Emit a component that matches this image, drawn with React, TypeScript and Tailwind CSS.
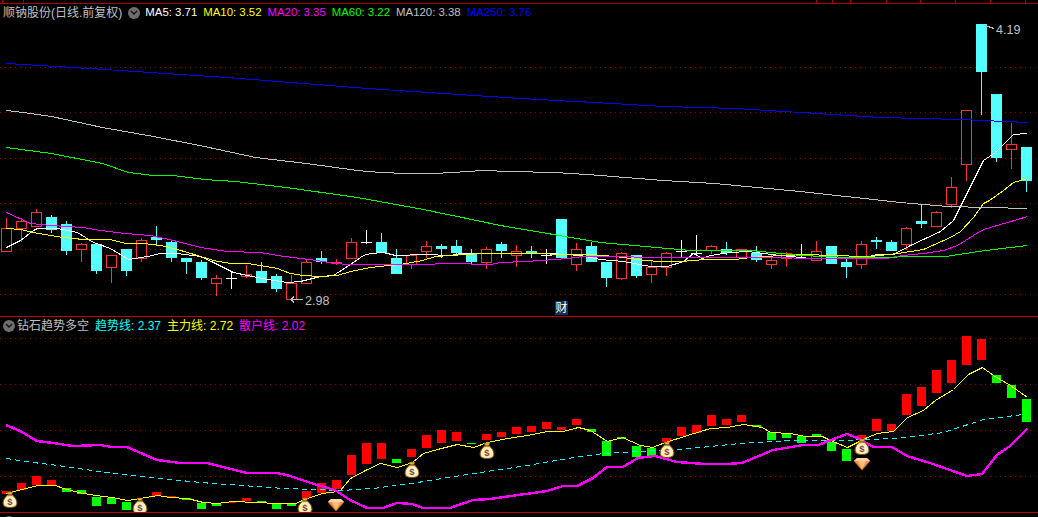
type Candle = [string, number, number, number, number];
type Bar = [string, number, number] | null;

// kind, body top, body bottom, wick top, wick bottom (index gives x)
const candles: Candle[] = [
  ["u", 228, 252, 218, 252], ["u", 221, 229, 218, 242], ["u", 212, 227, 209, 227], ["d", 217, 230, 215, 233],
  ["d", 224, 251, 221, 255], ["u", 244, 250, 243, 262], ["d", 244, 271, 244, 274], ["u", 255, 268, 255, 283],
  ["d", 249, 271, 249, 276], ["u", 240, 259, 238, 262], ["d", 237, 240, 226, 245], ["d", 242, 258, 240, 262],
  ["d", 258, 262, 258, 274], ["d", 262, 278, 260, 280], ["u", 278, 284, 275, 296], ["w", 278, 278, 272, 289],
  ["u", 274, 277, 265, 278], ["d", 271, 283, 262, 283], ["d", 276, 289, 274, 292], ["u", 283, 300, 275, 300],
  ["u", 262, 284, 260, 284], ["d", 258, 262, 251, 264], ["u", 262, 264, 259, 265], ["u", 242, 259, 238, 259],
  ["w", 242, 242, 230, 244], ["d", 242, 253, 233, 253], ["d", 258, 274, 249, 274], ["u", 255, 265, 255, 269],
  ["u", 246, 252, 241, 258], ["d", 246, 249, 244, 258], ["d", 246, 253, 240, 255], ["d", 253, 262, 249, 264],
  ["u", 249, 263, 247, 269], ["d", 244, 251, 242, 258], ["u", 251, 256, 245, 267], ["d", 251, 254, 246, 258],
  ["w", 255, 255, 249, 264], ["d", 219, 258, 219, 258], ["u", 249, 265, 243, 271], ["d", 246, 262, 242, 262],
  ["d", 262, 278, 262, 287], ["u", 253, 279, 252, 280], ["d", 255, 276, 255, 278], ["u", 267, 275, 260, 283],
  ["u", 253, 268, 252, 276], ["w", 251, 251, 240, 257], ["w", 253, 253, 235, 255], ["u", 246, 251, 245, 254],
  ["d", 249, 253, 242, 255], ["u", 249, 258, 249, 259], ["d", 253, 260, 246, 262], ["u", 260, 265, 255, 269],
  ["u", 253, 259, 252, 267], ["w", 258, 258, 244, 259], ["u", 251, 261, 241, 261], ["d", 246, 264, 246, 264],
  ["d", 262, 267, 259, 278], ["u", 244, 265, 241, 269], ["d", 240, 242, 237, 249], ["d", 242, 251, 240, 251],
  ["u", 228, 245, 227, 250], ["d", 221, 224, 205, 228], ["u", 212, 227, 211, 227], ["u", 187, 205, 177, 208],
  ["u", 110, 165, 110, 181], ["d", 24, 72, 24, 115], ["d", 94, 158, 94, 162], ["u", 144, 150, 123, 169],
  ["d", 147, 181, 147, 192],
];

const ma5 = "6,247 20,240 33,230 37,228 57,228 77,232 93,242 110,248 128,259 147,256 160,253 177,253 200,256 213,262 233,272 247,275 267,279 287,282 300,281 320,276 333,275 350,264 363,255 370,253 383,252 395,255 425,254 450,255 460,253 500,253 550,253 580,255 600,259 623,261 650,266 667,266 683,261 693,253 702,258 710,255 730,252 747,251 780,255 810,258 860,258 877,254 893,254 910,245 940,231 953,220 963,200 967,192 983,160 995,152 1013,134 1027,133";
const ma10 = "6,228 20,229 33,232 50,235 63,237 83,239 110,239 125,243 143,243 160,245 177,249 197,255 213,260 230,263 248,263 277,268 290,273 303,275 320,276 337,275 350,271 370,267 388,265 400,264 422,260 435,256 450,255 480,253 507,253 590,254 615,256 645,260 660,261 680,261 705,259 735,259 750,257 780,255 810,254 827,255 870,256 897,253 923,249 950,237 960,231 973,217 983,203 989,200 1003,190 1013,182 1027,178";
const ma20 = "6,212 30,223 50,225 83,227 100,230 125,233 150,235 173,240 200,247 227,251 260,252 277,255 300,258 317,260 333,263 350,264 420,264 450,263 490,264 500,262 525,261 555,259 567,258 583,256 617,256 650,257 700,257 885,258 903,255 923,253 943,250 957,245 973,235 983,229 1007,222 1027,216";
const ma60 = "6,147 51,153 102,163 128,172 153,175 173,175 204,179 235,181 286,187 357,197 423,209 500,225 600,242 690,250 750,250 800,255 850,257 945,256 985,250 1027,245";
const ma120 = "6,110 23,112 51,116 102,127 153,136 204,146 255,157 306,163 357,170 380,172 406,173 434,173 452,172 482,170 510,171 554,172 587,174 663,180 714,183 800,191 900,202 947,206 1027,208";
const ma250 = "6,63 89,68 226,77 367,88 520,98 556,100 612,103 663,106 735,108 800,112 880,117 960,119 1027,122";

const bars: Bar[] = [
  ["r", 491, 494], ["r", 483, 490], ["r", 476, 485], ["r", 480, 485], ["g", 488, 492], ["g", 490, 494], ["g", 497, 506], ["g", 498, 504],
  ["g", 502, 510], null, ["r", 492, 496], ["r", 496, 498], ["g", 498, 500], ["g", 503, 509], ["g", 503, 506], ["r", 502, 503],
  ["r", 498, 501], ["g", 501, 502], ["g", 504, 509], ["g", 504, 506], ["r", 491, 498], ["r", 483, 493], ["r", 480, 489], ["r", 455, 475],
  ["r", 443, 464], ["r", 443, 459], ["g", 459, 463], ["r", 449, 457], ["r", 435, 448], ["r", 430, 443], ["r", 432, 441], ["g", 443, 444],
  ["r", 434, 440], ["r", 432, 437], ["r", 427, 434], ["r", 426, 432], ["r", 422, 429], ["r", 427, 430], ["r", 419, 425], ["g", 429, 432],
  ["g", 441, 456], ["g", 437, 439], ["g", 446, 457], ["g", 448, 456], ["r", 438, 442], ["r", 427, 436], ["r", 425, 433], ["r", 415, 426],
  ["r", 419, 425], ["r", 415, 422], ["g", 425, 427], ["g", 432, 440], ["g", 433, 438], ["g", 436, 443], ["g", 434, 436], ["g", 442, 451],
  ["g", 449, 461], ["r", 435, 440], ["r", 419, 431], ["r", 424, 431], ["r", 394, 415], ["r", 387, 406], ["r", 370, 393], ["r", 360, 383],
  ["r", 336, 365], ["r", 339, 360], ["g", 375, 383], ["g", 385, 398], ["g", 399, 422],
];

const mainLine = "6,493 17,490 30,487 37,485 55,485 63,488 78,492 95,495 112,497 127,500 140,498 157,495 170,497 187,498 203,502 217,503 233,501 255,502 277,503 295,503 307,498 322,493 337,491 340,490 350,478 365,470 380,463 397,467 412,462 423,453 437,449 457,444 473,447 487,442 507,438 527,435 547,431 563,431 578,427 590,430 607,441 622,437 640,445 652,447 665,442 687,435 710,428 727,427 743,424 762,427 770,432 790,433 805,436 822,436 830,440 847,447 867,437 877,433 893,431 907,417 923,410 935,400 953,389 968,374 982,367 993,375 1010,385 1027,397";
const trendLine = "6,458 25,461 57,465 113,473 150,477 200,482 283,488 340,490 373,488 417,482 473,473 527,465 567,458 603,453 640,451 690,448 740,443 790,440 840,440 897,438 943,432 983,419 1023,414";
const retailLine = "6,425 20,431 37,441 53,443 73,446 100,445 112,447 127,447 143,454 157,460 180,463 207,463 247,473 277,473 290,476 317,485 335,490 350,500 367,508 383,508 397,503 412,504 423,508 450,508 473,500 490,499 547,491 563,486 577,486 593,478 607,467 623,467 638,458 655,456 677,462 705,464 727,464 742,463 773,450 803,445 818,445 847,434 860,439 873,447 892,447 907,456 930,463 967,476 982,474 997,455 1010,446 1027,429";

const coins = [[10, 500], [140, 506], [305, 506], [412, 470], [487, 451], [667, 450], [862, 447]];
const diamonds = [[336, 505], [862, 464]];

function Chevron() {
  return (
    <span className="w-[12px] h-[12px] rounded-full bg-[#6e6e6e] flex items-center justify-center shrink-0">
      <svg width="8" height="5" viewBox="0 0 8 5">
        <path d="M1 1l3 3 3-3" fill="none" stroke="#111" strokeWidth="1.4" />
      </svg>
    </span>
  );
}

function Grid({ ys }: { ys: number[] }) {
  return (
    <g stroke="#990000" strokeDasharray="1 4" shapeRendering="crispEdges">
      {ys.map((y) => (
        <line key={y} x1="0" x2="1038" y1={y + 0.5} y2={y + 0.5} />
      ))}
    </g>
  );
}

function Line({ points, color }: { points: string; color: string }) {
  return <polyline points={points} fill="none" stroke={color} strokeWidth="1" shapeRendering="crispEdges" transform="translate(0.5 0.5)" />;
}

function MoneyBag({ x, y }: { x: number; y: number }) {
  return (
    <g transform={`translate(${x} ${y})`}>
      <path d="M-3-8h6l-1.500 3h-3z" fill="#f2b441" stroke="#6b4a18" strokeWidth="0.6" />
      <path d="M-2.500-5h5c2.500 2 4.500 5 4.500 8 0 3-2 4.500-7 4.500s-7-1.500-7-4.500c0-3 2-6 4.500-8z" fill="url(#bagFill)" stroke="#6b4c1c" strokeWidth="1" />
      <text x="0" y="5" textAnchor="middle" fontSize="9.500" fontWeight="700" fontFamily="Liberation Sans, sans-serif" fill="#8a4038">$</text>
    </g>
  );
}

function Diamond({ x, y }: { x: number; y: number }) {
  return (
    <g transform={`translate(${x} ${y})`}>
      <path d="M-8-3l3-3h10l3 3-8 9z" fill="#ef9440" />
      <path d="M-8-3h16l-3-3h-10z" fill="#ffd3a2" />
      <path d="M-4-3h8l-4 8z" fill="#ffbd7c" />
      <path d="M-8-3l8 9 8-9" fill="none" stroke="#b5651d" strokeWidth="0.8" />
    </g>
  );
}

export default function App() {
  return (
    <div className="w-[1038px] h-[517px] bg-black overflow-hidden flex flex-col font-['Liberation_Sans','Noto_Sans_CJK_SC',sans-serif] text-[12px] leading-none">
      {/* ruler on top */}
      <div className="h-[4px] shrink-0 border-b border-[#a80000] relative">
        <svg width="1038" height="3" className="block">
          <g stroke="#a80000" shapeRendering="crispEdges">
            {[2, 23, 816, 832, 850, 886, 920, 955, 990, 1025].map((x) => (
              <line key={x} x1={x + 0.5} x2={x + 0.5} y1="0" y2="3" />
            ))}
          </g>
        </svg>
      </div>

      {/* kline panel */}
      <div className="h-[313px] shrink-0 border-b border-[#c00000] relative">
        <div className="h-[17px] flex items-center pl-[3px] whitespace-nowrap">
          <span className="text-[#c0c0c0]">顺钠股份(日线.前复权)</span>
          <span className="ml-[6px] mr-[5px]">
            <Chevron />
          </span>
          <div className="flex gap-[6px] text-[11.4px]">
            <span className="text-white">MA5: 3.71</span>
            <span className="text-[#ffff00]">MA10: 3.52</span>
            <span className="text-[#ff00ff]">MA20: 3.35</span>
            <span className="text-[#00ff00]">MA60: 3.22</span>
            <span className="text-[#c0c0c0]">MA120: 3.38</span>
            <span className="text-[#0000ff]">MA250: 3.76</span>
          </div>
        </div>
        <svg width="1038" height="295" viewBox="0 21 1038 295" className="block">
          <Grid ys={[67, 112, 158, 203, 249, 294]} />
          {candles.map(([kind, top, bottom, wickTop, wickBottom], i) => {
            const x = 1 + 15 * i;
            const color = kind === "u" ? "#ff3232" : kind === "d" ? "#54ffff" : "#ffffff";
            return (
              <g key={i} shapeRendering="crispEdges">
                {wickTop < top && <line x1={x + 5.5} x2={x + 5.5} y1={wickTop} y2={top} stroke={color} />}
                {wickBottom > bottom && <line x1={x + 5.5} x2={x + 5.5} y1={bottom} y2={wickBottom} stroke={color} />}
                {kind === "u" && <rect x={x + 0.5} y={top + 0.5} width="10" height={bottom - top - 1} fill="#000" stroke={color} />}
                {kind === "d" && <rect x={x} y={top} width="11" height={bottom - top} fill={color} />}
                {kind === "w" && <rect x={x} y={top} width="11" height="1" fill={color} />}
              </g>
            );
          })}
          <Line points={ma5} color="#ffffff" />
          <Line points={ma10} color="#ffff00" />
          <Line points={ma20} color="#ff00ff" />
          <Line points={ma60} color="#00ff00" />
          <Line points={ma120} color="#c0c0c0" />
          <Line points={ma250} color="#0000ff" />
          {/* high / low arrows */}
          <path d="M985 25.500l9 3M291 299.500h12M294 296.500l-3 3 3 3" fill="none" stroke="#c0c0c0" shapeRendering="crispEdges" />
        </svg>
        <span className="absolute left-[996px] top-[20px] text-[#c0c0c0] text-[12.5px]">4.19</span>
        <span className="absolute left-[305px] top-[291px] text-[#c0c0c0] text-[12.5px]">2.98</span>
        <span className="absolute left-[555px] top-[297px] w-[13px] h-[14px] bg-[#0f3556] text-white flex items-center justify-center">财</span>
      </div>

      {/* indicator panel */}
      <div className="h-[196px] shrink-0 border-b border-[#c00000]">
        <div className="h-[17px] flex items-center pl-[3px] whitespace-nowrap">
          <Chevron />
          <span className="ml-[2px] text-[#c0c0c0]">钻石趋势多空</span>
          <div className="ml-[6px] flex gap-[6px]">
            <span className="text-[#00ffff]">趋势线: 2.37</span>
            <span className="text-[#ffff00]">主力线: 2.72</span>
            <span className="text-[#ff00ff]">散户线: 2.02</span>
          </div>
        </div>
        <svg width="1038" height="178" viewBox="0 334 1038 178" className="block">
          <defs>
            <radialGradient id="bagFill" cx="50%" cy="55%" r="60%">
              <stop offset="0%" stopColor="#fffbe0" />
              <stop offset="65%" stopColor="#fff0b0" />
              <stop offset="100%" stopColor="#e0a83e" />
            </radialGradient>
          </defs>
          <Grid ys={[338, 384, 430, 476]} />
          {bars.map((bar, i) =>
            bar ? (
              <rect key={i} x={2 + 15 * i} y={bar[1]} width="9" height={bar[2] - bar[1]} fill={bar[0] === "r" ? "#ff0000" : "#00ff00"} shapeRendering="crispEdges" />
            ) : null,
          )}
          <Line points={mainLine} color="#ffff00" />
          <polyline points={trendLine} fill="none" stroke="#00ffff" strokeWidth="1" strokeDasharray="5 4" shapeRendering="crispEdges" transform="translate(0.5 0.5)" />
          <polyline points={retailLine} fill="none" stroke="#ff00ff" strokeWidth="2.4" shapeRendering="crispEdges" />
          {coins.map(([x, y]) => (
            <MoneyBag key={x} x={x} y={y} />
          ))}
          {diamonds.map(([x, y]) => (
            <Diamond key={x} x={x} y={y} />
          ))}
        </svg>
      </div>

      {/* next panel, cut off by the window */}
      <div className="h-[17px] shrink-0 flex items-center pl-[3px] whitespace-nowrap">
        <Chevron />
        <span className="ml-[2px] text-[#c0c0c0]">VOLUME</span>
        <div className="ml-[6px] flex gap-[6px]">
          <span className="text-white">VOL: 123790</span>
          <span className="text-white">MA5: 87230</span>
          <span className="text-[#ffff00]">MA10: 90145</span>
        </div>
      </div>
    </div>
  );
}
